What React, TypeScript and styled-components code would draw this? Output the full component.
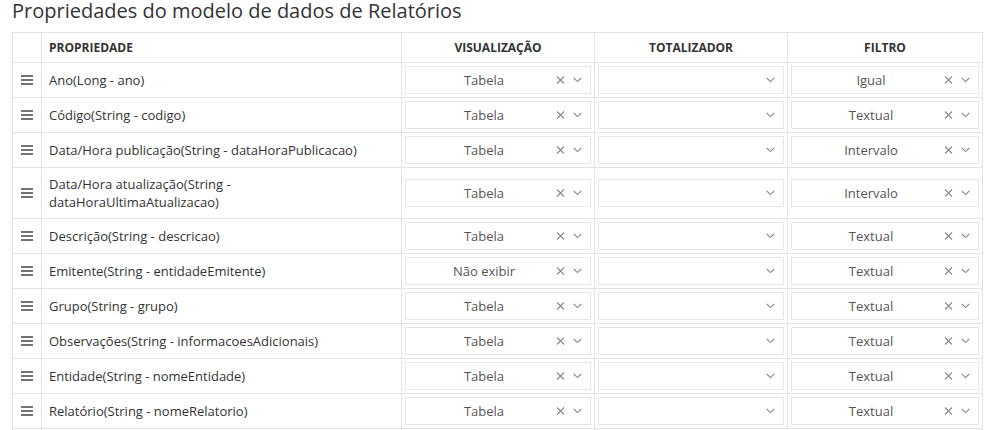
import React from "react";
import styled, { createGlobalStyle } from "styled-components";

const Global = createGlobalStyle`
  html, body { margin: 0; padding: 0; background: #fff; }
  body { font-family: "Open Sans", "Noto Sans", sans-serif; color: #333; }
`;

const Page = styled.div`
  padding: 0 12px 0 12px;
`;

const Title = styled.h2`
  margin: 0 0 10px 0;
  font-size: 20px;
  line-height: 22px;
  font-weight: 400;
  color: #333;
`;

const Table = styled.table`
  border-collapse: collapse;
  table-layout: fixed;
  width: 970px;
`;

const Th = styled.th<{ $align?: string }>`
  border: 1px solid #e3e3e3;
  font-size: 12px;
  line-height: 17px;
  font-weight: 700;
  color: #333;
  text-align: ${(p) => p.$align || "center"};
  padding: 6px 7px;
`;

const Td = styled.td<{ $pad?: string }>`
  border: 1px solid #e3e3e3;
  font-size: 13px;
  line-height: 18px;
  color: #333;
  padding: ${(p) => p.$pad || "7px 7px"};
  vertical-align: middle;
`;

const DragCell = styled(Td)`
  text-align: center;
  padding: 0;
`;

const Select = styled.div`
  position: relative;
  display: flex;
  align-items: center;
  height: 26px;
  border: 1px solid #e6e6e6;
  background: #fff;
`;

const Value = styled.div`
  flex: 1;
  padding-right: 28px;
  text-align: center;
  font-size: 13px;
  color: #555;
  white-space: nowrap;
`;

const Clear = styled.span`
  position: absolute;
  right: 25px;
  top: 50%;
  transform: translateY(-50%);
  display: flex;
`;

const Chevron = styled.span`
  position: absolute;
  right: 8px;
  top: 50%;
  transform: translateY(-50%);
  display: flex;
`;

const DragIcon = () => (
  <svg width="12" height="10" viewBox="0 0 12 10">
    <rect x="0" y="0" width="12" height="2" fill="#737373" />
    <rect x="0" y="4" width="12" height="2" fill="#737373" />
    <rect x="0" y="8" width="12" height="2" fill="#737373" />
  </svg>
);

const XIcon = () => (
  <svg width="9" height="9" viewBox="0 0 9 9">
    <path d="M1 1L8 8M8 1L1 8" stroke="#8a8a8a" strokeWidth="1.1" fill="none" />
  </svg>
);

const ChevronIcon = () => (
  <svg width="9" height="6" viewBox="0 0 9 6">
    <path d="M0.8 1L4.5 4.6L8.2 1" stroke="#8a8a8a" strokeWidth="1.1" fill="none" />
  </svg>
);

const SelectBox = ({ value }: { value?: string }) => (
  <Select>
    <Value>{value || "\u00a0"}</Value>
    {value && (
      <Clear>
        <XIcon />
      </Clear>
    )}
    <Chevron>
      <ChevronIcon />
    </Chevron>
  </Select>
);

const rows: [string, string, string][] = [
  ["Ano(Long - ano)", "Tabela", "Igual"],
  ["Código(String - codigo)", "Tabela", "Textual"],
  ["Data/Hora publicação(String - dataHoraPublicacao)", "Tabela", "Intervalo"],
  ["Data/Hora atualização(String - dataHoraUltimaAtualizacao)", "Tabela", "Intervalo"],
  ["Descrição(String - descricao)", "Tabela", "Textual"],
  ["Emitente(String - entidadeEmitente)", "Não exibir", "Textual"],
  ["Grupo(String - grupo)", "Tabela", "Textual"],
  ["Observações(String - informacoesAdicionais)", "Tabela", "Textual"],
  ["Entidade(String - nomeEntidade)", "Tabela", "Textual"],
  ["Relatório(String - nomeRelatorio)", "Tabela", "Textual"],
  ["Tipo(String - tipo)", "Tabela", "Textual"],
];

export default function App() {
  return (
    <Page>
      <Global />
      <Title>Propriedades do modelo de dados de Relatórios</Title>
      <Table>
        <colgroup>
          <col style={{ width: 29 }} />
          <col style={{ width: 360 }} />
          <col style={{ width: 193 }} />
          <col style={{ width: 193 }} />
          <col style={{ width: 195 }} />
        </colgroup>
        <thead>
          <tr>
            <Th />
            <Th $align="left">PROPRIEDADE</Th>
            <Th>VISUALIZAÇÃO</Th>
            <Th>TOTALIZADOR</Th>
            <Th>FILTRO</Th>
          </tr>
        </thead>
        <tbody>
          {rows.map(([name, vis, filt]) => (
            <tr key={name}>
              <DragCell>
                <DragIcon />
              </DragCell>
              <Td>{name}</Td>
              <Td $pad="3px 3px">
                <SelectBox value={vis} />
              </Td>
              <Td $pad="3px 3px">
                <SelectBox />
              </Td>
              <Td $pad="3px 3px">
                <SelectBox value={filt} />
              </Td>
            </tr>
          ))}
        </tbody>
      </Table>
    </Page>
  );
}
